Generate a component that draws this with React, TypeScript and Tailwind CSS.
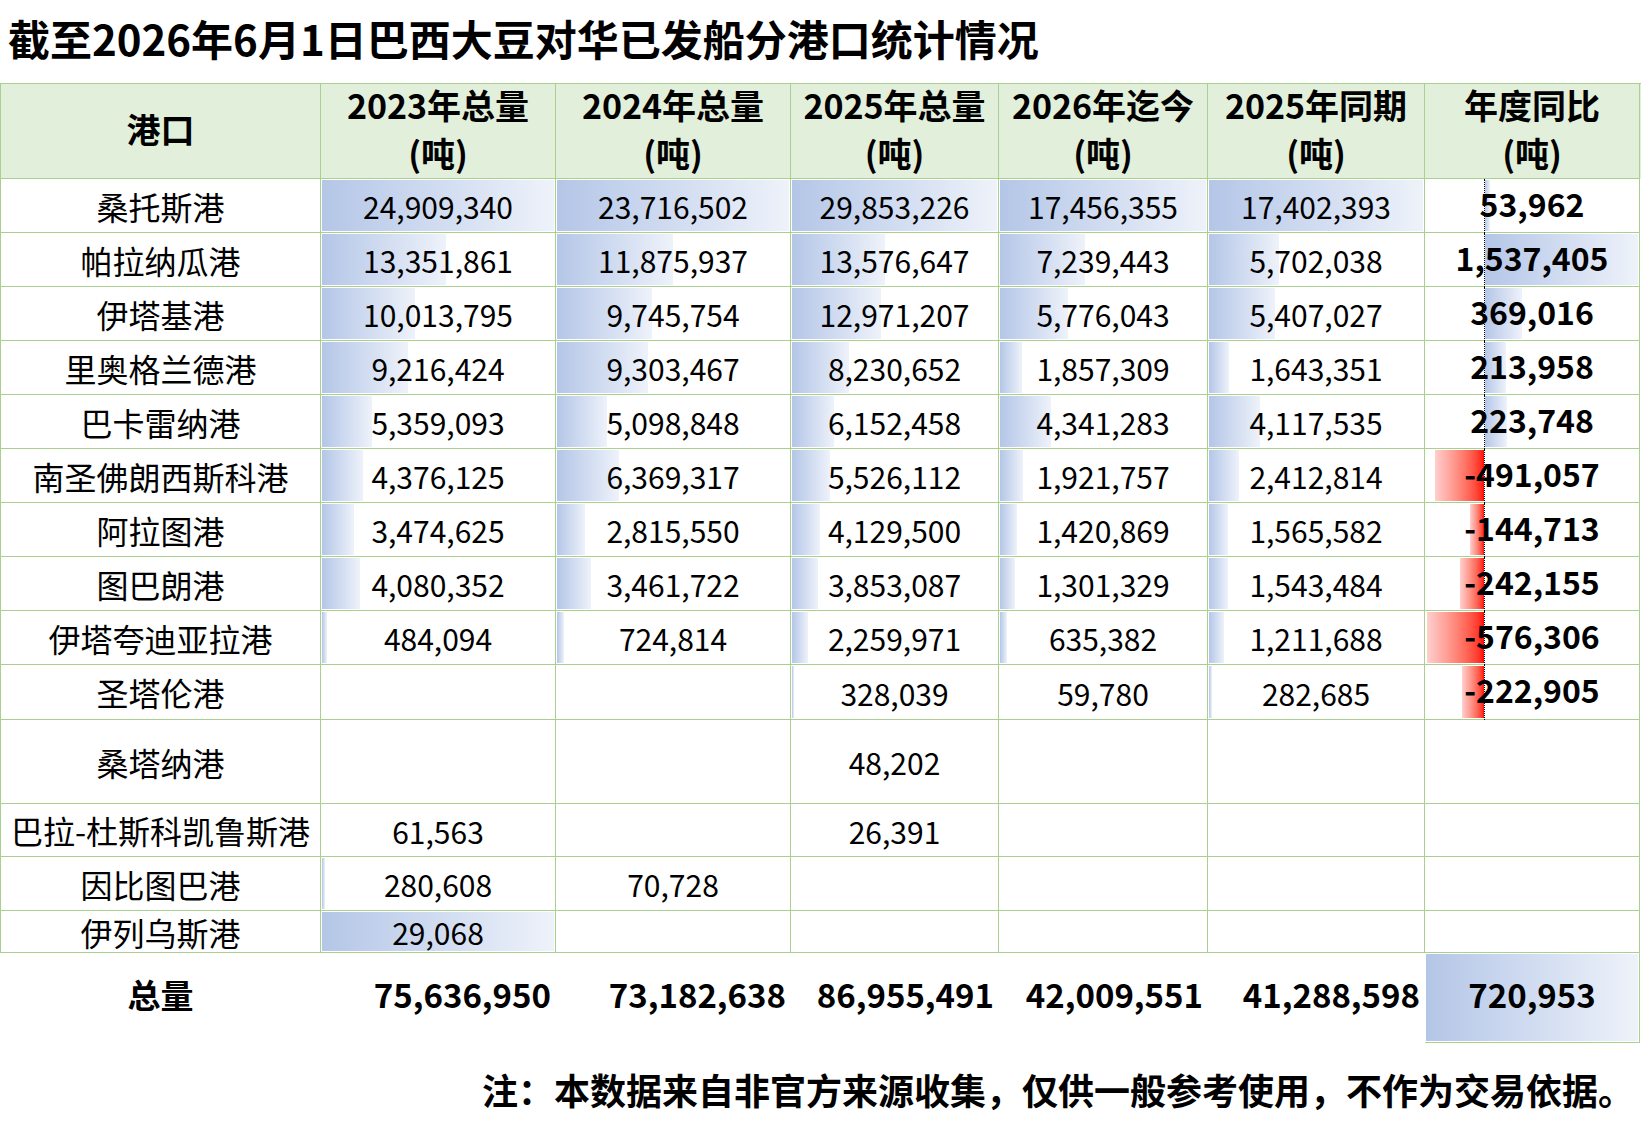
import React from "react";

type Row = {
  name: string;
  h: string;
  vals: (number | null)[];
  yoy: number | null;
  fullFirst?: boolean;
};

const colMax = [24909340, 23716502, 29853226, 17456355, 17402393];
const barMax = [232, 232, 205, 206, 214];
const yoyScale = 153 / 1537405;

const rows: Row[] = [
  { name: "桑托斯港", h: "h-[54px]", vals: [24909340, 23716502, 29853226, 17456355, 17402393], yoy: 53962 },
  { name: "帕拉纳瓜港", h: "h-[54px]", vals: [13351861, 11875937, 13576647, 7239443, 5702038], yoy: 1537405 },
  { name: "伊塔基港", h: "h-[54px]", vals: [10013795, 9745754, 12971207, 5776043, 5407027], yoy: 369016 },
  { name: "里奥格兰德港", h: "h-[54px]", vals: [9216424, 9303467, 8230652, 1857309, 1643351], yoy: 213958 },
  { name: "巴卡雷纳港", h: "h-[54px]", vals: [5359093, 5098848, 6152458, 4341283, 4117535], yoy: 223748 },
  { name: "南圣佛朗西斯科港", h: "h-[54px]", vals: [4376125, 6369317, 5526112, 1921757, 2412814], yoy: -491057 },
  { name: "阿拉图港", h: "h-[54px]", vals: [3474625, 2815550, 4129500, 1420869, 1565582], yoy: -144713 },
  { name: "图巴朗港", h: "h-[54px]", vals: [4080352, 3461722, 3853087, 1301329, 1543484], yoy: -242155 },
  { name: "伊塔夸迪亚拉港", h: "h-[54px]", vals: [484094, 724814, 2259971, 635382, 1211688], yoy: -576306 },
  { name: "圣塔伦港", h: "h-[55px]", vals: [null, null, 328039, 59780, 282685], yoy: -222905 },
  { name: "桑塔纳港", h: "h-[84px]", vals: [null, null, 48202, null, null], yoy: null },
  { name: "巴拉-杜斯科凯鲁斯港", h: "h-[53px]", vals: [61563, null, 26391, null, null], yoy: null },
  { name: "因比图巴港", h: "h-[54px]", vals: [280608, 70728, null, null, null], yoy: null },
  { name: "伊列乌斯港", h: "h-[42px]", vals: [29068, null, null, null, null], yoy: null, fullFirst: true },
];

const headers = ["2023年总量", "2024年总量", "2025年总量", "2026年迄今", "2025年同期", "年度同比"];
const totals = [75636950, 73182638, 86955491, 42009551, 41288598];

const fmt = (n: number) => n.toLocaleString("en-US");
const grid = "grid grid-cols-[321px_235px_235px_208px_209px_217px_215px]";
const cell = "border-r border-b border-[#a9d08e]";

function DataCell({ v, col, full }: { v: number | null; col: number; full?: boolean }) {
  const w = v == null ? 0 : full ? barMax[col] : (v / colMax[col]) * barMax[col];
  return (
    <div className={`${cell} relative flex items-center justify-center pt-[1px]`}>
      {w >= 1 && (
        <div
          className="absolute left-[1px] top-[1px] bottom-[1px] bg-linear-to-r from-[#b4c6e7] to-[#eef2fa]"
          style={{ width: w }}
        />
      )}
      {v != null && <span className="relative text-[30px] leading-none">{fmt(v)}</span>}
    </div>
  );
}

function YoyCell({ v }: { v: number | null }) {
  const w = v == null ? 0 : Math.abs(v) * yoyScale;
  return (
    <div className={`${cell} relative flex items-center justify-center pb-[6px]`}>
      {v != null && v < 0 && (
        <div
          className="absolute top-[1px] bottom-[1px] bg-linear-to-r from-[#ffcfcf] to-[#ff0000]"
          style={{ left: 59 - w, width: w }}
        />
      )}
      {v != null && v > 0 && (
        <div
          className="absolute top-[1px] bottom-[1px] left-[60px] bg-linear-to-r from-[#b4c6e7] to-[#eef2fa]"
          style={{ width: w }}
        />
      )}
      {v != null && <div className="absolute left-[59px] top-0 bottom-[-1px] border-l border-dotted border-black" />}
      {v != null && <span className="relative text-[32px] font-bold leading-none">{fmt(v)}</span>}
    </div>
  );
}

export default function App() {
  return (
    <div className="w-[1641px] h-[1143px] bg-white text-black font-['Noto_Sans_CJK_SC',sans-serif]">
      <div className="h-[83px] flex items-center pl-[8px] pb-[8px] text-[42px] font-bold leading-none">
        截至2026年6月1日巴西大豆对华已发船分港口统计情况
      </div>

      <div className={`${grid} grid-rows-[95px] h-[96px] bg-[#e2efda] border-t border-[#a9d08e]`}>
        <div className={`${cell} border-l flex items-center justify-center pb-[4px] text-[34px] font-bold leading-[48px]`}>
          港口
        </div>
        {headers.map((h) => (
          <div
            key={h}
            className={`${cell} min-h-0 flex flex-col items-center justify-center pb-[4px] text-[34px] font-semibold leading-[48px]`}
          >
            <span>{h}</span>
            <span>(吨)</span>
          </div>
        ))}
      </div>

      {rows.map((r) => (
        <div key={r.name} className={`${grid} ${r.h}`}>
          <div className={`${cell} border-l flex items-center justify-center text-[32px] leading-none whitespace-nowrap`}>
            {r.name}
          </div>
          {r.vals.map((v, i) => (
            <DataCell key={i} v={v} col={i} full={i === 0 && r.fullFirst} />
          ))}
          <YoyCell v={r.yoy} />
        </div>
      ))}

      <div className={`${grid} h-[90px] text-[33px] font-bold`}>
        <div className="flex items-center justify-center pb-[6px]">总量</div>
        {totals.map((t) => (
          <div key={t} className="flex items-center justify-end pr-[5px] pb-[6px]">
            {fmt(t)}
          </div>
        ))}
        <div className="border-r border-b border-[#a9d08e] relative flex items-center justify-center pb-[6px]">
          <div className="absolute inset-[1px] bg-linear-to-r from-[#b4c6e7] to-[#eef2fa]" />
          <span className="relative">720,953</span>
        </div>
      </div>

      <div className="h-[100px] flex items-center justify-end pr-[7px] pb-[8px] text-[36px] font-bold leading-none">
        注：本数据来自非官方来源收集，仅供一般参考使用，不作为交易依据。
      </div>
    </div>
  );
}
